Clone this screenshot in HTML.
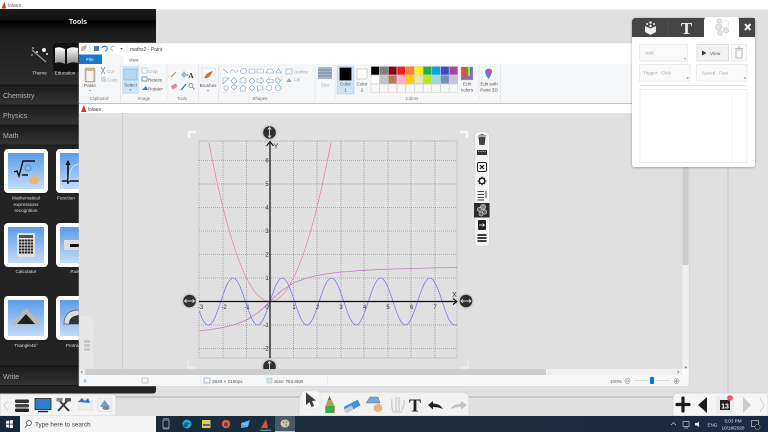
<!DOCTYPE html>
<html><head><meta charset="utf-8"><title>lolaes</title>
<style>
html,body{margin:0;padding:0;width:768px;height:432px;overflow:hidden;background:#e0e0e0}
svg{display:block;position:absolute;left:0;top:0;filter:blur(.3px)}
text{font-family:"Liberation Sans",sans-serif}
.r{font-size:4.6px;fill:#555;text-anchor:middle}
.g{font-size:4.4px;fill:#777;text-anchor:middle}
.d{font-size:4.4px;fill:#aaa}
.n{font-size:6px;fill:#333;text-anchor:middle}
.m{font-size:7px;fill:#b5b5b5}
.t{font-size:4.7px;fill:#ddd;text-anchor:middle}
.s{font-size:4.6px;fill:#555}
</style></head><body>
<svg width="768" height="432" viewBox="0 0 768 432" xmlns="http://www.w3.org/2000/svg">
<defs>
<linearGradient id="rowg" x1="0" y1="0" x2="0" y2="1"><stop offset="0" stop-color="#1b1b1b"/><stop offset="1" stop-color="#343434"/></linearGradient>
<linearGradient id="head" x1="0" y1="0" x2="0" y2="1"><stop offset="0" stop-color="#1a1a1a"/><stop offset=".45" stop-color="#111"/><stop offset=".5" stop-color="#000"/><stop offset="1" stop-color="#1c1c1c"/></linearGradient>
<linearGradient id="tile" x1="0" y1="0" x2="0" y2="1"><stop offset="0" stop-color="#5b9ce6"/><stop offset="1" stop-color="#c2dcfb"/></linearGradient>
<linearGradient id="body" x1="0" y1="0" x2="0" y2="1"><stop offset="0" stop-color="#1c1c1c"/><stop offset="1" stop-color="#2c2c2c"/></linearGradient>
<linearGradient id="tb" x1="0" y1="0" x2="1" y2="0"><stop offset="0" stop-color="#14283a"/><stop offset=".5" stop-color="#1d2f3e"/><stop offset="1" stop-color="#1a2a44"/></linearGradient>
<linearGradient id="book" x1="0" y1="0" x2="0" y2="1"><stop offset="0" stop-color="#fff"/><stop offset="1" stop-color="#888"/></linearGradient>
<filter id="sh" x="-10%" y="-10%" width="120%" height="120%"><feDropShadow dx="0" dy="0.5" stdDeviation="1.2" flood-color="#000" flood-opacity=".35"/></filter>
</defs>

<!-- page -->
<rect width="768" height="432" fill="#e0e0e0"/>
<rect width="768" height="9.5" fill="#fff"/>
<path d="M1.500 8.500L4.500 1.500L6 8.500Z" fill="#c8401c"/>
<text x="8" y="7.200" font-size="5" fill="#666">lolaes</text>
<line x1="728" y1="165" x2="728" y2="397" stroke="#bdbdbd" stroke-width=".7"/>
<rect x="0" y="396" width="768" height="2" fill="#c6c6c6"/>

<!-- tools panel -->
<path d="M0 9H156V390Q156 393.500 153 393.500H0Z" fill="#232323"/>
<rect x="0" y="9" width="156" height="24" fill="url(#head)"/>
<text x="78" y="24" font-size="7" font-weight="bold" fill="#eee" text-anchor="middle">Tools</text>
<rect x="0" y="33" width="156" height="52" fill="url(#body)"/>
<rect x="53" y="43" width="28" height="29" rx="4" fill="#111"/>
<g stroke="#eee" fill="#eee">
<line x1="32" y1="50" x2="46" y2="62" stroke-width="1.300" stroke="#999"/>
<circle cx="44" cy="50" r="2" stroke="none"/><circle cx="33" cy="48" r=".8" stroke="none"/><circle cx="37" cy="52" r="1" stroke="none"/><circle cx="32" cy="55" r=".7" stroke="none"/><circle cx="47" cy="54" r="1" stroke="none"/>
</g>
<path d="M55 48Q60 46 65 49V64Q60 61 55 63ZM67 49Q72 46 78 48V63Q72 61 67 64Z" fill="url(#book)"/>
<text x="39.500" y="74.500" class="t">Theme</text>
<text x="65" y="74.500" class="t">Education</text>

<rect x="0" y="85" width="156" height="20" fill="url(#rowg)"/>
<rect x="0" y="105" width="156" height="20" fill="url(#rowg)"/>
<rect x="0" y="125" width="156" height="20" fill="url(#rowg)"/>
<path d="M0 85H156M0 105H156M0 125H156M0 145H156" stroke="#111" stroke-width=".8"/>
<text x="3" y="98" class="m">Chemistry</text>
<text x="3" y="118" class="m">Physics</text>
<text x="3" y="138" class="m">Math</text>

<!-- tiles -->
<g>
<rect x="4" y="149" width="44" height="44" rx="4" fill="#fff"/><rect x="8" y="153" width="36" height="36" fill="url(#tile)"/>
<path d="M14 172L17 171L19 176L23 161H35M22 175H28" fill="none" stroke="#111" stroke-width="1.400"/>
<circle cx="28" cy="168" r="3" fill="none" stroke="#4678b5" stroke-width=".7"/>
<ellipse cx="34" cy="180" rx="5" ry="4.500" fill="#e6b77c"/>
<rect x="56" y="149" width="30" height="44" rx="4" fill="#fff"/><rect x="60" y="153" width="26" height="36" fill="url(#tile)"/>
<path d="M68 161V184M62 181H79" stroke="#111" stroke-width="1.600" fill="none"/><path d="M68 160L65.500 165H70.500Z" fill="#111"/>
<path d="M69 181Q69 165 79 164" stroke="#cde" fill="none" stroke-width="1"/>

<rect x="4" y="223" width="44" height="44" rx="4" fill="#fff"/><rect x="8" y="227" width="36" height="36" fill="url(#tile)"/>
<rect x="17" y="233" width="18" height="24" rx="1.500" fill="#e0e0e0"/><rect x="19" y="235" width="14" height="3" fill="#555"/>
<path d="M19 240.500H33M19 243.500H33M19 246.500H33M19 249.500H33M19 252.500H33" stroke="#222" stroke-width="2" stroke-dasharray="2.400 .6"/>
<rect x="56" y="223" width="30" height="44" rx="4" fill="#fff"/><rect x="60" y="227" width="26" height="36" fill="url(#tile)"/>
<rect x="64" y="240" width="20" height="10" fill="#ddd"/><rect x="70" y="244" width="12" height="3" fill="#111"/>

<rect x="4" y="296" width="44" height="44" rx="4" fill="#fff"/><rect x="8" y="300" width="36" height="36" fill="url(#tile)"/>
<path d="M26 308L41 325H11Z" fill="#bbb"/><path d="M26 314L35 324H17Z" fill="#222"/>
<rect x="56" y="296" width="30" height="44" rx="4" fill="#fff"/><rect x="60" y="300" width="26" height="36" fill="url(#tile)"/>
<path d="M64 324Q64 310 79 310V324Z" fill="#ddd" stroke="#555" stroke-width=".7"/><path d="M69 324Q69 316 79 315V324Z" fill="#333"/>
</g>
<text class="t" x="26" y="199.500">Mathematical</text>
<text class="t" x="26" y="205.800">expressions</text>
<text class="t" x="26" y="212">recognition</text>
<text class="t" x="66" y="199.500">Function</text>
<text class="t" x="26" y="273">Calculator</text>
<text class="t" x="76" y="273">Ruler</text>
<text class="t" x="26" y="347">Triangle45°</text>
<text class="t" x="76" y="347">Protractor</text>
<rect x="0" y="366" width="156" height="20" fill="url(#rowg)"/>
<path d="M0 366H156M0 385.500H156" stroke="#111" stroke-width=".8"/>
<text x="3" y="379" class="m">Write</text>

<!-- paint window -->
<rect x="79" y="43" width="610" height="343" fill="#fff" stroke="#c8c8c8" stroke-width=".5"/>
<path d="M81 51L84 46L87 45L85 50Z" fill="#8a9ab8"/><circle cx="83" cy="48" r="2" fill="#d9b98c"/>
<line x1="90" y1="45" x2="90" y2="52" stroke="#bbb" stroke-width=".5"/>
<rect x="94" y="46" width="5" height="5" fill="#4a78b0"/>
<path d="M102 48Q104 45 107 47Q108 50 105 51" fill="none" stroke="#1e6fc0" stroke-width="1"/>
<path d="M115 47Q112 45 111 48Q111 50 113 51" fill="none" stroke="#9bb" stroke-width="1"/>
<path d="M120 48H123L121.500 49.500Z" fill="#555"/>
<line x1="127" y1="45" x2="127" y2="52" stroke="#ccc" stroke-width=".5"/>
<text x="130" y="51" font-size="5" fill="#444">maths2 - Paint</text>
<rect x="79" y="54.500" width="23" height="9.500" fill="#1979ca"/>
<text x="90" y="61" class="r" style="fill:#fff">File</text>
<text x="113" y="61.500" class="r">Home</text>
<text x="133.500" y="61.500" class="r">View</text>
<rect x="79" y="64" width="610" height="39" fill="#f5f6f7"/>
<rect x="102.500" y="54.500" width="21" height="10" fill="#f5f6f7"/>
<rect x="79" y="103" width="610" height="1" fill="#b9c3cf"/>
<path d="M120.500 65V101M167 65V101M198.500 65V101M218.500 65V101M315 65V101M335 65V101M479 65V101M500.500 65V101" stroke="#e1e3e6" stroke-width=".7"/>

<!-- clipboard -->
<rect x="85" y="68" width="10" height="14" rx="1" fill="#cdb79a" stroke="#a08d72" stroke-width=".5"/><rect x="86.500" y="71" width="7" height="10" fill="#f1f1f1"/>
<text x="90" y="87" class="r">Paste</text><path d="M89 90H91L90 91Z" fill="#555"/>
<text x="99" y="100" class="g" dx="0">Clipboard</text>
<path d="M101 67L105 74M105 67L101 74" stroke="#8a93a0" stroke-width=".8"/><text x="107" y="73" class="d">Cut</text>
<rect x="101" y="77" width="5" height="5" fill="#cdd8e6"/><text x="107" y="81.500" class="d">Copy</text>
<!-- image -->
<rect x="122" y="66" width="17" height="28" fill="#cce4f7"/><rect x="124" y="69" width="13" height="11" fill="#b9d6f0" stroke="#7ba8d4" stroke-width=".5"/>
<text x="130.500" y="86.500" class="r">Select</text><path d="M129.500 89.500H131.500L130.500 90.500Z" fill="#555"/>
<text x="144" y="100" class="g">Image</text>
<rect x="142" y="68" width="5" height="5" fill="none" stroke="#b7c3cf" stroke-width=".7"/><text x="148" y="73" class="d">Crop</text>
<rect x="142" y="77" width="5" height="4" fill="none" stroke="#3a79b8" stroke-width=".7"/><text x="148" y="81.500" class="s">Resize</text>
<path d="M142 90L146 86L148 90Z" fill="#3a79b8"/><text x="148" y="90.500" class="s">Rotate</text><path d="M161 88.500H163L162 89.500Z" fill="#555"/>
<!-- tools -->
<path d="M171 77L176 72" stroke="#c8923c" stroke-width="1.200"/>
<path d="M181 75L184 71L187 75L184 78Z" fill="#9bb9da"/><circle cx="187.500" cy="75" r="1" fill="#e6a23c"/>
<text x="191" y="78" font-size="7.500" font-weight="bold" fill="#2b3a55" text-anchor="middle" style="font-family:'Liberation Serif',serif">A</text>
<rect x="171" y="84.500" width="6" height="4" rx="1" fill="#e58a9b" transform="rotate(-30 174 86)"/>
<path d="M181 90L186 84" stroke="#2468b5" stroke-width="1.200"/>
<circle cx="191" cy="85.500" r="2" fill="none" stroke="#777" stroke-width=".7"/><path d="M192.500 87L194.500 89.500" stroke="#777" stroke-width=".9"/>
<text x="182" y="100" class="g">Tools</text>
<!-- brushes -->
<rect x="202" y="68" width="13" height="13" fill="#f8f8f8" stroke="#ccc" stroke-width=".4"/><path d="M204 78Q207 72 213 71L210 76Q207 79 204 78Z" fill="#d96a30"/>
<text x="208" y="87" class="r">Brushes</text><path d="M207 90H209L208 91Z" fill="#555"/>
<!-- shapes -->
<rect x="221" y="67" width="60" height="25" fill="#fff" stroke="#e4e6e9" stroke-width=".5"/>
<g fill="none" stroke="#6f9ccc" stroke-width=".6">
<path d="M223 69L228 73M230 73Q232 68 234 71T238 70M240 71L242 68.500H245L247 71L245 73.500H242ZM249 69H255V73H249ZM257 69H263L264 73H257ZM266 73L268 69H272L274 73ZM276 73L278.500 68.500L281 73Z"/>
<path d="M223 84V78H229ZM231 81L234 77.500L237 81L234 84.500ZM240 79L243 77.500L246 79L246 83H240ZM249 81L252 78L255 81L252 84ZM257 79H261V77.500L264 81L261 84V82.500H257ZM266 81L269 78V79.500H273V82.500H269V84ZM276 78L279 78V80H281L278 84L275 80H276Z"/>
<path d="M224 86H228V89L226 91L224 89ZM231 86.500L234 90L237 86.500L234 85ZM240 88L243 85L246 88L245 91H241ZM249 88L252 85.500L255 88L252 91ZM257 86H263V90H259L258 91ZM266 88A3 2.500 0 1 1 272 88A3 2.500 0 1 1 266 88ZM275 88A3 2.500 0 1 1 281 88A3 2.500 0 1 1 275 88Z"/>
</g>
<path d="M282 70V90" stroke="#ddd" stroke-width=".5"/>
<rect x="286" y="69" width="6" height="5" fill="none" stroke="#9ab" stroke-width=".6"/><text x="294" y="73.500" class="d">Outline</text>
<path d="M286 82L289 78L292 82Z" fill="#9ab"/><text x="294" y="81.500" class="d">Fill</text>
<text x="260" y="100" class="g">Shapes</text>
<!-- size -->
<rect x="318" y="67" width="14" height="12" fill="#a9b7c9"/><path d="M318 70H332M318 73H332M318 76H332" stroke="#6f86a5" stroke-width="1"/>
<text x="325" y="86.500" class="d" text-anchor="middle">Size</text>
<!-- colors -->
<rect x="337" y="66" width="17" height="28" fill="#cce4f7" stroke="#a9cbe8" stroke-width=".4"/>
<rect x="339.500" y="67.500" width="12" height="13" fill="#000" stroke="#999" stroke-width=".6"/>
<text x="345.500" y="85.500" class="r">Color</text><text x="345.500" y="91.500" class="r">1</text>
<rect x="357" y="69" width="10" height="10" fill="#fff" stroke="#aaa" stroke-width=".5"/>
<text x="362" y="85.500" class="r">Color</text><text x="362" y="91.500" class="r">2</text>
<g stroke="#c8c8c8" stroke-width=".4">
<rect x="371" y="66.500" width="8.400" height="8.400" fill="#000"/><rect x="379.700" y="66.500" width="8.400" height="8.400" fill="#7f7f7f"/><rect x="388.400" y="66.500" width="8.400" height="8.400" fill="#880015"/><rect x="397.100" y="66.500" width="8.400" height="8.400" fill="#ed1c24"/><rect x="405.800" y="66.500" width="8.400" height="8.400" fill="#ff7f27"/><rect x="414.500" y="66.500" width="8.400" height="8.400" fill="#fff200"/><rect x="423.200" y="66.500" width="8.400" height="8.400" fill="#22b14c"/><rect x="431.900" y="66.500" width="8.400" height="8.400" fill="#00a2e8"/><rect x="440.600" y="66.500" width="8.400" height="8.400" fill="#3f48cc"/><rect x="449.300" y="66.500" width="8.400" height="8.400" fill="#a349a4"/>
<rect x="371" y="75.300" width="8.400" height="8.400" fill="#fff"/><rect x="379.700" y="75.300" width="8.400" height="8.400" fill="#c3c3c3"/><rect x="388.400" y="75.300" width="8.400" height="8.400" fill="#b97a57"/><rect x="397.100" y="75.300" width="8.400" height="8.400" fill="#ffaec9"/><rect x="405.800" y="75.300" width="8.400" height="8.400" fill="#ffc90e"/><rect x="414.500" y="75.300" width="8.400" height="8.400" fill="#efe4b0"/><rect x="423.200" y="75.300" width="8.400" height="8.400" fill="#b5e61d"/><rect x="431.900" y="75.300" width="8.400" height="8.400" fill="#99d9ea"/><rect x="440.600" y="75.300" width="8.400" height="8.400" fill="#7092be"/><rect x="449.300" y="75.300" width="8.400" height="8.400" fill="#c8bfe7"/>
<g fill="#f6f6f6"><rect x="371" y="84.100" width="8.400" height="8.400"/><rect x="379.700" y="84.100" width="8.400" height="8.400"/><rect x="388.400" y="84.100" width="8.400" height="8.400"/><rect x="397.100" y="84.100" width="8.400" height="8.400"/><rect x="405.800" y="84.100" width="8.400" height="8.400"/><rect x="414.500" y="84.100" width="8.400" height="8.400"/><rect x="423.200" y="84.100" width="8.400" height="8.400"/><rect x="431.900" y="84.100" width="8.400" height="8.400"/><rect x="440.600" y="84.100" width="8.400" height="8.400"/><rect x="449.300" y="84.100" width="8.400" height="8.400"/></g>
</g>
<rect x="461" y="67" width="12" height="13" fill="#8a6fb0" stroke="#bbb" stroke-width=".4"/>
<path d="M462 67h2v8h-2zM464 67h2v10h-2z" fill="#e34b3c"/><path d="M466 67h2v7h-2z" fill="#3fae49"/><path d="M468 67h2v9h-2z" fill="#f2c21a"/><path d="M470 67h2v6h-2z" fill="#2a8fd6"/>
<text x="467" y="85.500" class="r">Edit</text><text x="467" y="91.500" class="r">colors</text>
<text x="412" y="100" class="g">Colors</text>
<rect x="482" y="67" width="13" height="13" fill="#fff" stroke="#ddd" stroke-width=".5"/>
<path d="M485 71Q488.500 66 492 71Q492 75 488.500 79Q485 75 485 71Z" fill="#5b7fe0"/><path d="M488 69Q492 68 492 72Q490 75 488.500 73Z" fill="#e8516f"/>
<text x="489" y="85.500" class="r">Edit with</text><text x="489" y="91.500" class="r">Paint 3D</text>

<!-- embedded lolaes -->
<rect x="79" y="104" width="610" height="9" fill="#fff"/>
<path d="M81 112L84 105L86.500 112Z" fill="#c8401c"/>
<text x="88" y="111" font-size="5" fill="#444">lolaes</text>
<rect x="79.500" y="113" width="603" height="256" fill="#e0e0e0"/>
<rect x="122" y="113" width="1" height="256" fill="#cfcfcf"/>
<path d="M79.500 315H88Q94 315 94 321V369H79.500Z" fill="#e6e6e6" stroke="#dcdcdc" stroke-width=".5"/>
<rect x="84" y="340" width="6" height="3" rx="1" fill="#c8c8c8"/><rect x="84" y="344" width="6" height="3" rx="1" fill="#c8c8c8"/><rect x="84" y="348" width="6" height="3" rx="1" fill="#c8c8c8"/>

<!-- corner marks -->
<g fill="none" stroke="#f4f4f4" stroke-width="2.500" stroke-linejoin="round">
<path d="M189 138V132H196"/><path d="M460 132H467V138"/>
</g>
<path d="M188 360V368H196" fill="none" stroke="#efefef" stroke-width="1.200"/>
<path d="M468 360V368H460" fill="none" stroke="#efefef" stroke-width="1.200"/>

<!-- graph grid -->
<rect x="199" y="141" width="258" height="217" fill="none" stroke="#b4b4b4" stroke-width=".9" stroke-dasharray="1.500 1"/>
<g stroke="#9a9a9a" stroke-width=".8" stroke-dasharray="1 1" fill="none">
<path d="M223 141V358M246.500 141V358M293.500 141V358M317 141V358M341 141V358M364 141V358M388 141V358M411 141V358M435 141V358"/>
<path d="M199 160.500H457M199 184H457M199 207.500H457M199 231H457M199 254.500H457M199 278H457M199 325H457M199 348.500H457"/>
</g>
<!-- curves -->
<path d="M208.900 142.600Q239.450 301.500 270 301.500Q300.500 301.500 331 142.600" fill="none" stroke="#e58aa3" stroke-width=".8"/>
<polyline fill="none" stroke="#c07cc4" stroke-width=".8" points="199.500,330.900 211.250,329.500 223,327.500 234.750,324.600 246.500,320 258.250,312.400 264.100,307.300 270,301.500 275.900,295.700 281.750,290.600 293.500,283 305.250,278.400 317,275.500 328.750,273.500 340.500,272.100 364,270.300 387.500,269.200 411,268.500 434.500,267.900 457,267.500"/>
<path d="M199.500 311C201.500 318 204.500 325 208.500 325C217.500 325 224.100 278 233.100 278S248.700 325 257.700 325S273.300 278 282.300 278S297.900 325 306.900 325S322.500 278 331.500 278S347.100 325 356.100 325S371.700 278 380.700 278S396.300 325 405.300 325S420.900 278 429.900 278S445.500 325 454.500 325L457 325" fill="none" stroke="#7b7bea" stroke-width=".8"/>
<!-- axes -->
<path d="M199 301.500H456M270 358V143" stroke="#0a0a0a" stroke-width="1.200" fill="none"/>
<path d="M266.500 146L270 141.500L273.500 146" stroke="#0a0a0a" stroke-width="1.100" fill="none"/>
<path d="M453 298.500L457 301.500L453 304.500" stroke="#0a0a0a" stroke-width="1.100" fill="none"/>
<text x="276" y="148.500" class="n" style="font-size:7px">Y</text>
<text x="454.500" y="297" class="n" style="font-size:7px">X</text>
<g class="l">
<text class="n" x="200.500" y="309">-3</text><text class="n" x="224" y="309">-2</text><text class="n" x="247" y="309">-1</text><text class="n" x="267" y="309">0</text><text class="n" x="294" y="309">1</text><text class="n" x="317.500" y="309">2</text><text class="n" x="341" y="309">3</text><text class="n" x="364.500" y="309">4</text><text class="n" x="388" y="309">5</text><text class="n" x="411.500" y="309">6</text><text class="n" x="435" y="309">7</text>
<text class="n" x="267" y="162.500">6</text><text class="n" x="267" y="186">5</text><text class="n" x="267" y="209.500">4</text><text class="n" x="267" y="233">3</text><text class="n" x="267" y="256.500">2</text><text class="n" x="267" y="280">1</text><text class="n" x="266" y="327">-1</text><text class="n" x="266" y="350.500">-2</text>
</g>
<!-- handles -->
<g>
<circle cx="269.500" cy="132.500" r="8" fill="#cfcfcf"/><circle cx="269.500" cy="132.500" r="6.300" fill="#2e2e2e"/><path d="M269.500 128V137M267.800 129.500L269.500 127.500L271.200 129.500M267.800 135.500L269.500 137.500L271.200 135.500" stroke="#ddd" fill="none" stroke-width=".9"/>
<circle cx="189.500" cy="301" r="8" fill="#cfcfcf"/><circle cx="189.500" cy="301" r="6.300" fill="#2e2e2e"/><path d="M185 301H194M186.500 299.300L184.500 301L186.500 302.700M192.500 299.300L194.500 301L192.500 302.700" stroke="#ddd" fill="none" stroke-width=".9"/>
<circle cx="466" cy="301" r="8" fill="#cfcfcf"/><circle cx="466" cy="301" r="6.300" fill="#2e2e2e"/><path d="M461.500 301H470.500M463 299.300L461 301L463 302.700M469 299.300L471 301L469 302.700" stroke="#ddd" fill="none" stroke-width=".9"/>
<circle cx="269.500" cy="366.500" r="8" fill="#cfcfcf"/><circle cx="269.500" cy="366.500" r="6.300" fill="#2e2e2e"/><path d="M269.500 362V369M267.800 363.500L269.500 361.500L271.200 363.500" stroke="#ddd" fill="none" stroke-width=".9"/>
</g>

<!-- object toolbar -->
<rect x="474.500" y="131.500" width="15" height="115" rx="4" fill="#f3f3f3" stroke="#d2d2d2" stroke-width=".7"/>
<rect x="474" y="203" width="15.500" height="14.500" fill="#2b2b2b"/>
<path d="M478 136H486M479 137.500H485L484.300 144.500H479.700ZM480.500 134.500H483.500" fill="#444" stroke="#333" stroke-width=".8"/>
<rect x="477" y="150" width="10" height="5" fill="#333"/><path d="M478 151.500H486" stroke="#ddd" stroke-width=".7" stroke-dasharray="1 .7"/>
<rect x="477.500" y="162.500" width="9" height="9" rx="1.500" fill="#fff" stroke="#222" stroke-width="1"/><path d="M480 165L484 169M484 165L480 169" stroke="#111" stroke-width="1.200"/>
<circle cx="482" cy="181" r="2.800" fill="none" stroke="#222" stroke-width="1.600"/><path d="M482 176.500V178M482 184V185.500M477.500 181H479M485 181H486.500M479 178L480 179M484 183L485 184M485 178L484 179M479 184L480 183" stroke="#222" stroke-width="1"/>
<path d="M477.500 191.500H484M477.500 194.500H484M477.500 197.500H484M477.500 200H484" stroke="#444" stroke-width="1.100"/><path d="M486 191V198" stroke="#333" stroke-width=".9"/>
<circle cx="483" cy="207" r="2.600" fill="#888" stroke="#ddd" stroke-width=".6"/><circle cx="479.500" cy="209.500" r="2.200" fill="#666" stroke="#ddd" stroke-width=".6"/><circle cx="484.500" cy="212" r="2.200" fill="#666" stroke="#ddd" stroke-width=".6"/><circle cx="481" cy="214" r="2" fill="#666" stroke="#ddd" stroke-width=".6"/>
<rect x="478" y="220" width="8" height="10" rx="1" fill="#222"/><path d="M479 225H484M482.500 223.500L484.500 225L482.500 226.500" stroke="#fff" fill="none" stroke-width=".7"/>
<path d="M477.500 235H486.500M477.500 238H486.500M477.500 241H486.500" stroke="#222" stroke-width="1.800"/>

<!-- scrollbars & status -->
<rect x="682.500" y="113" width="6" height="256" fill="#f0f0f0"/>
<rect x="682.500" y="119" width="6" height="146" fill="#cdcdcd"/>
<rect x="79.500" y="369" width="603" height="6" fill="#f0f0f0"/>
<rect x="85" y="369" width="461" height="6" fill="#cdcdcd"/>
<path d="M82.500 370.800L81 372L82.500 373.200M677.500 370.800L679 372L677.500 373.200M684.500 366.500L685.700 368L687 366.500" stroke="#666" fill="none" stroke-width=".6"/>
<rect x="79.500" y="375" width="609" height="11" fill="#f5f6f7"/>
<path d="M83 381H87M85 378.500V383" stroke="#5b90c2" stroke-width=".6"/>
<rect x="142" y="378" width="6" height="5" fill="none" stroke="#999" stroke-width=".5"/>
<rect x="204" y="378" width="6" height="5" fill="none" stroke="#7a9cc0" stroke-width=".6"/><text x="212" y="383" class="s">3840 × 2160px</text>
<rect x="267" y="378" width="5" height="5" fill="#d5deea" stroke="#8aa" stroke-width=".4"/><text x="274" y="383" class="s">Size: 753.8KB</text>
<path d="M327.500 375.500V386M201 375.500V386" stroke="#e4e4e4" stroke-width=".5"/>
<text x="610" y="383" class="s">100%</text>
<circle cx="627.500" cy="381" r="2.600" fill="#eee" stroke="#888" stroke-width=".5"/><path d="M626 381H629" stroke="#555" stroke-width=".5"/>
<line x1="634" y1="380.500" x2="670" y2="380.500" stroke="#d4d4d4" stroke-width=".8"/>
<rect x="650" y="377" width="4" height="7" rx="1" fill="#0078d7"/>
<circle cx="676.500" cy="381" r="2.600" fill="#eee" stroke="#888" stroke-width=".5"/><path d="M675 381H678M676.500 379.500V382.500" stroke="#555" stroke-width=".5"/>

<!-- floating panel -->
<g filter="url(#sh)">
<path d="M636 18H751Q755 18 755 22V164Q755 167 752 167H635Q632 167 632 164V22Q632 18 636 18Z" fill="#fff"/>
</g>
<path d="M632 37V22Q632 18 636 18H755V37Z" fill="#454545"/>
<path d="M751 18Q755 18 755 22V37H738V18Z" fill="#454545"/>
<path d="M704 37V21Q704 17 708 17H736Q739 17 739 20V37Z" fill="#fff"/>
<path d="M668 21V35" stroke="#555" stroke-width=".6"/>
<path d="M645 26L650.500 28.500L656 26V32L650.500 35L645 32Z" fill="#eee"/><circle cx="647" cy="24" r="1" fill="#eee"/><circle cx="650.500" cy="22.500" r="1.300" fill="#eee"/><circle cx="654" cy="24" r="1" fill="#eee"/><circle cx="650.500" cy="26" r="1.200" fill="#eee"/>
<text x="686.500" y="34" font-size="17" font-weight="bold" fill="#ececec" text-anchor="middle" style="font-family:'Liberation Serif',serif">T</text>
<g fill="#e4e4e4" stroke="#c4c4c4" stroke-width=".6">
<circle cx="725" cy="24" r="3.800" fill="#fff" stroke="#d8d8d8"/><circle cx="719" cy="21" r="2.200"/><circle cx="718.500" cy="27" r="3" /><circle cx="726" cy="30.500" r="2.500"/><circle cx="720" cy="33" r="2.400"/>
</g>
<path d="M745 24L750.500 30M750.500 24L745 30" stroke="#fff" stroke-width="2"/>
<g stroke="#e2e2e2" stroke-width=".6">
<rect x="639.500" y="44.500" width="48" height="16.500" fill="#f9f9f9"/>
<rect x="697" y="44.500" width="31.500" height="16.500" fill="#f3f3f3" stroke="#ccc"/>
<rect x="731.500" y="44.500" width="15" height="16.500" fill="#fafafa"/>
<rect x="639.500" y="64.500" width="50.500" height="16.500" fill="#f9f9f9"/>
<rect x="696.500" y="64.500" width="50.500" height="16.500" fill="#f9f9f9"/>
<rect x="640" y="89.500" width="107" height="73" fill="#fff"/>
</g>
<line x1="640" y1="85.500" x2="747" y2="85.500" stroke="#ddd" stroke-width=".7"/>
<line x1="731.500" y1="90" x2="731.500" y2="162" stroke="#f0f0f0" stroke-width=".6"/>
<text x="645" y="54.500" font-size="4.800" fill="#aaa">Add</text>
<path d="M702 50.500V55.500L706.500 53Z" fill="#333"/>
<text x="710" y="55" font-size="4.800" fill="#555">View</text>
<path d="M735 48.500H743M736 50V58H742V50ZM738 47H740" fill="none" stroke="#bbb" stroke-width="1"/>
<text x="643" y="74.500" font-size="4.600" fill="#aaa">Trigger : Click</text>
<text x="702" y="74.500" font-size="4.600" fill="#aaa">Speed : Fast</text>
<path d="M684 58L686 58L685 59.500ZM686.500 77.500H689L687.700 79ZM743.500 77.500H746L744.700 79Z" fill="#888"/>

<!-- bottom toolbars -->
<path d="M0 394H111Q116 394 116 399V416H0Z" fill="#f3f3f3" stroke="#d0d0d0" stroke-width=".7"/>
<path d="M8 401L4 405.500L8 411" fill="none" stroke="#ccc" stroke-width=".8"/>
<g>
<rect x="15" y="399.500" width="14" height="3.500" rx="1.200" fill="#333"/><rect x="15" y="404" width="14" height="3.500" rx="1.200" fill="#444"/><rect x="15" y="408.500" width="14" height="3.500" rx="1.200" fill="#222"/>
<rect x="35" y="398.500" width="16" height="11" fill="#2f7fd0" stroke="#222" stroke-width=".8"/><path d="M38 411.500H48" stroke="#222" stroke-width="1.400"/>
<path d="M58 399L69 411M69 399L58 411" stroke="#333" stroke-width="1.800"/><rect x="56.500" y="398" width="6" height="3.500" fill="#888"/><rect x="65" y="398" width="6" height="3.500" fill="#555"/>
<rect x="78" y="401" width="14" height="9" fill="#eee" stroke="#ccc" stroke-width=".4"/><path d="M78 402L82 398L85 401L88 398L90 403Z" fill="#2c7dc9"/>
<rect x="98" y="398.500" width="13" height="13" fill="#eef2f7" stroke="#ccd" stroke-width=".5"/><path d="M100 407L104.500 400L110 407Z" fill="#6f9fd0"/><ellipse cx="106" cy="408" rx="3.500" ry="2" fill="#888"/>
</g>

<path d="M299 416V404Q299 392 305 392H462Q469 392 469 399V416Z" fill="#f1f1f1" stroke="#cfcfcf" stroke-width=".7"/>
<rect x="302" y="391" width="18" height="18" rx="3" fill="#f6f6f6" stroke="#ddd" stroke-width=".5"/>
<path d="M306 392.500L306 405L309.500 402L311.500 407L314 406L312 401L316 400.500Z" fill="#3b3b3b"/>
<path d="M329.500 396L325 407V413H335V407Z" fill="#b99a5a"/><path d="M329.500 396L327.800 400H331.200Z" fill="#3f8f3f"/><rect x="326" y="406" width="8" height="7" fill="#32b04b"/>
<rect x="344" y="403" width="16" height="6.500" rx="1" fill="#3d8fe0" transform="rotate(-28 352 406)"/><rect x="344" y="407" width="9" height="4" rx="1" fill="#ccc" transform="rotate(-28 349 409)"/>
<path d="M366 403L370 397H378L380 403Z" fill="#7aa6db" stroke="#555" stroke-width=".4"/><ellipse cx="378" cy="408" rx="4.500" ry="4" fill="#e6b77c"/>
<path d="M393 412Q391 404 392 399M396 412V397M399 412V397M402 410Q405 404 404 400M393 412H402" stroke="#cfcfcf" stroke-width="1.500" fill="none"/>
<text x="415" y="411.500" font-size="18" font-weight="bold" fill="#222" text-anchor="middle" style="font-family:'Liberation Serif',serif">T</text>
<path d="M428 405L433 401V403.500Q440 403.500 443 409Q438 407 433 407V409.500Z" fill="#222"/>
<path d="M467 405L461 401V403.500Q454 403.500 450 409Q456 407 461 407V409.500Z" fill="#c4c4c4"/>

<path d="M768 393H678Q673 393 673 398V416H768Z" fill="#f5f5f5" stroke="#d0d0d0" stroke-width=".7"/>
<path d="M683 398V411M677 404.500H689" stroke="#1c1c1c" stroke-width="3.200" stroke-linecap="round"/>
<path d="M707 397V413L698 405Z" fill="#1c1c1c"/>
<rect x="716" y="396" width="18" height="18" rx="2" fill="#ececec"/>
<rect x="720" y="400" width="10" height="10" fill="#222"/><text x="725" y="408.500" font-size="7" font-weight="bold" fill="#fff" text-anchor="middle">13</text>
<circle cx="730" cy="398" r="2.800" fill="#ee5a6a"/>
<path d="M743 397L751 405L743 413Z" fill="#cdcdcd"/>
<path d="M760 398L764 405.500L760 412" fill="none" stroke="#d0d0d0" stroke-width=".9"/>

<!-- taskbar -->
<rect x="0" y="416" width="768" height="16" fill="url(#tb)"/>
<path d="M6 421L9 420.500V423.800H6ZM9.700 420.400L13 420V423.800H9.700ZM6 424.500H9V427.700L6 427.300ZM9.700 424.500H13V428.300L9.700 427.900Z" fill="#e8eef4"/>
<rect x="20" y="416" width="136" height="16" fill="#f4f4f4"/>
<circle cx="29" cy="423" r="2.400" fill="none" stroke="#333" stroke-width=".7"/><path d="M27.300 424.800L25 427.500" stroke="#333" stroke-width=".7"/>
<text x="35" y="426.500" font-size="6.300" fill="#444">Type here to search</text>
<rect x="163" y="420" width="6" height="8" fill="none" stroke="#d5dbe0" stroke-width=".6"/><path d="M163 418.800H169M163 429H169" stroke="#d5dbe0" stroke-width=".5"/>
<circle cx="187" cy="424" r="4.500" fill="#2ba8c9"/><path d="M183 425Q186 420 191 424Q187 423 187 427Q185 428 183 425Z" fill="#0f5f9e"/>
<path d="M202 420H210.500V428H202Z" fill="#f2c648"/><path d="M203 424H210V426H203Z" fill="#2778c4"/>
<circle cx="226" cy="424" r="4.200" fill="#e8621e"/><circle cx="226" cy="424.500" r="2" fill="#4b3a9e"/>
<path d="M241 423L250 420L248 427L241 428Z" fill="#5ba7e6"/><path d="M243 424H248" stroke="#fff" stroke-width=".5"/>
<rect x="260" y="429.800" width="11" height=".8" fill="#9cc4e4"/>
<path d="M261 428L266 419L268 428Z" fill="#d9532c"/>
<rect x="275" y="416" width="20" height="16" fill="#45596a"/><rect x="275" y="431" width="20" height="1" fill="#9cc4e4"/>
<ellipse cx="285" cy="423.500" rx="4.500" ry="4" fill="#d8c3a0"/><circle cx="283.500" cy="422.500" r=".9" fill="#d44"/><circle cx="286.500" cy="422" r=".9" fill="#48c"/><circle cx="286" cy="425" r=".9" fill="#4a4"/>
<path d="M671 425L673.500 422.500L676 425" fill="none" stroke="#cfd6dc" stroke-width=".6"/>
<rect x="683" y="421.500" width="6" height="5" fill="none" stroke="#dfe5ea" stroke-width=".6"/><path d="M684 428H688" stroke="#dfe5ea" stroke-width=".6"/>
<path d="M695 423H697L699 421.500V427L697 425.500H695Z" fill="#dfe5ea"/>
<text x="712.500" y="426.500" font-size="4.600" fill="#dfe5ea" text-anchor="middle">ENG</text>
<text x="733" y="422.500" font-size="4.600" fill="#e2e7ec" text-anchor="middle">5:03 PM</text>
<text x="733" y="429.500" font-size="4.600" fill="#e2e7ec" text-anchor="middle">10/18/2020</text>
<rect x="751.500" y="420.500" width="7" height="6" fill="none" stroke="#dfe5ea" stroke-width=".6"/>
<circle cx="757.500" cy="427" r="2.600" fill="#222" stroke="#ccc" stroke-width=".4"/>
</svg>
</body></html>
